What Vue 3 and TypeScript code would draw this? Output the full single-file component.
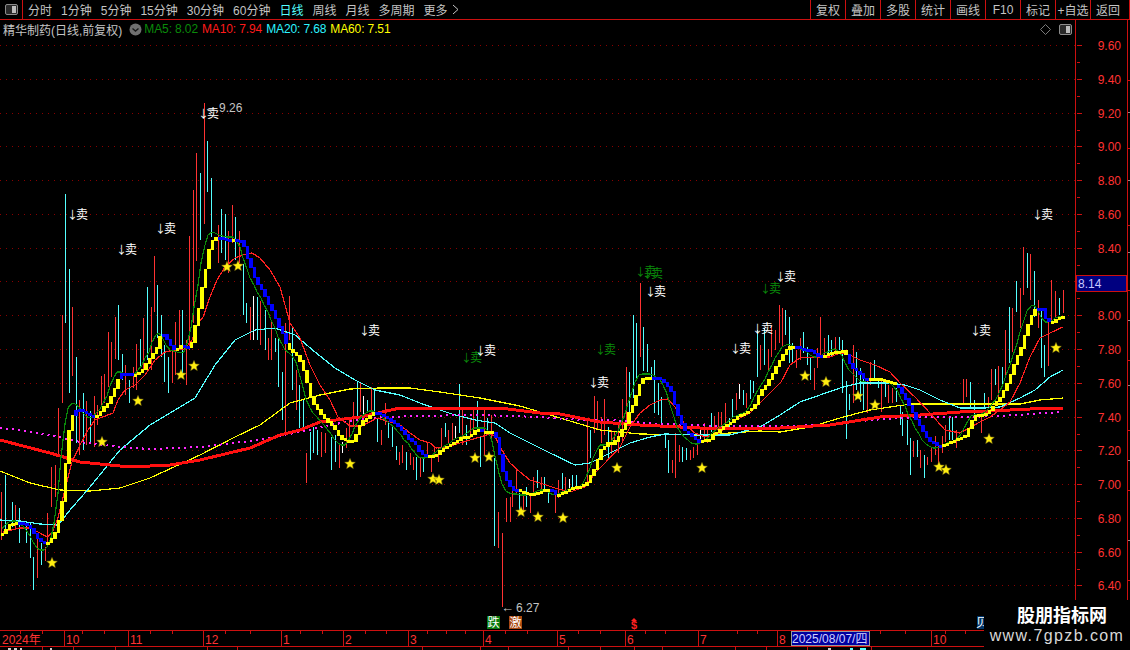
<script setup lang="ts">
type Pt = [number, number]

const periods = ['分时', '1分钟', '5分钟', '15分钟', '30分钟', '60分钟', '日线', '周线', '月线', '多周期', '更多']
const actions = ['复权', '叠加', '多股', '统计', '画线', 'F10', '标记', '+自选', '返回']
const legend = [
  { text: 'MA5: 8.02', cls: 'green' },
  { text: 'MA10: 7.94', cls: 'red' },
  { text: 'MA20: 7.68', cls: 'cyan' },
  { text: 'MA60: 7.51', cls: 'yellow' },
]

const priceY = (p: number): number => Math.round(45 + (9.6 - p) * 168.9)
const gridPrices: number[] = Array.from({ length: 17 }, (_, i) => 9.6 - i * 0.2)
const gridY: number[] = gridPrices.map((p) => priceY(p) + 0.5)
const halfTicks: number[] = gridPrices.slice(0, 16).map((p) => priceY(p) + 17.5)

const parsePts = (s: string): Pt[] =>
  s.trim().split(/\s+/).map((t) => {
    const [a, b] = t.split(',').map(Number)
    return [a, b] as Pt
  })

const toPoints = (pts: Pt[]): string => pts.map((p) => p.join(',')).join(' ')

const ma10 = parsePts(`3,532 8,531 20,528 30,528 40,533 47,537 52,533 58,518 65,490 72,462 80,445 88,430 95,420 113,413 118,400 125,390 135,385 145,375 155,360 165,352 175,350 185,349 192,340 197,325 203,317 210,297 217,280 225,267 235,258 243,255 252,253 260,258 270,270 280,287 290,323 300,338 310,365 320,385 330,400 338,417 350,426 362,426 377,418 400,425 410,433 420,440 430,443 436,448 447,447 460,443 470,440 480,437 490,434 495,436 500,447 510,463 520,472 530,480 540,483 555,488 570,492 585,487 595,473 605,463 620,447 630,427 640,413 650,405 660,400 668,399 675,407 685,425 695,433 705,437 720,433 730,423 750,413 765,398 781,382 790,365 800,358 815,357 830,357 840,353 850,355 860,360 875,365 890,372 900,383 915,397 930,413 945,430 960,433 980,422 990,417 1000,410 1010,402 1020,383 1030,357 1040,338 1050,333 1063,327`)
const ma20 = parsePts(`0,520 20,521 40,524 58,525 70,510 90,487 120,450 150,425 175,410 195,398 215,365 235,340 255,330 275,328 295,335 315,352 335,368 355,380 375,390 400,395 420,403 440,410 455,415 475,420 495,423 510,433 530,443 550,453 575,465 590,463 610,453 630,443 650,437 665,434 700,435 730,435 760,427 780,415 800,402 820,395 840,388 860,383 890,383 905,385 920,390 940,400 960,408 985,408 1000,407 1020,398 1035,390 1050,377 1063,370`)
const ma60 = parsePts(`0,471 30,483 60,490 90,491 120,488 150,478 200,455 235,437 260,425 290,403 320,395 350,389 380,388 410,388 440,392 480,398 520,406 560,418 600,430 640,434 700,435 760,431 780,432 810,427 840,418 870,410 910,404 960,404 1020,404 1040,400 1063,398`)
const thick = parsePts(`0,440 50,453 80,462 130,467 170,465 200,460 250,448 280,435 300,430 320,422 360,417 400,408 430,408 500,408 540,413 560,414 600,422 640,425 700,428 780,428 830,425 880,417 920,415 960,412 990,411 1030,409 1063,408`)
const dotted = parsePts(`0,428 20,430 50,435 80,442 120,447 150,449 200,447 250,441 300,432 330,425 370,418 410,416 480,415 540,417 580,420 610,420 660,424 720,426 780,426 830,425 870,420 920,417 960,417 1000,416 1063,412`)

const ladderPts = parsePts(`0,535 5,530 8,525 14,523 20,523 28,527 33,534 38,541 44,544 47,543 52,537 56,528 59,513 63,490 65,455 69,423 73,412 78,410 85,414 92,418 95,417 100,411 103,407 108,402 112,392 116,383 118,376 122,373 130,375 133,375 137,374 142,370 146,362 150,357 155,350 158,340 160,333 164,336 169,345 173,349 175,350 180,346 187,347 190,345 193,330 197,312 200,293 204,273 207,253 211,242 214,238 218,238 224,240 232,240 235,241 240,241 243,247 246,258 250,268 253,277 257,285 261,291 264,297 268,306 272,312 277,325 282,335 286,347 289,351 295,355 300,363 303,373 307,387 310,400 315,408 320,415 325,420 331,427 335,432 339,438 345,442 350,441 353,441 357,428 360,423 363,420 368,417 371,413 375,412 382,416 387,419 392,423 397,427 402,432 407,439 412,443 415,446 420,455 425,456 430,456 435,455 440,450 445,447 450,445 455,442 460,438 465,437 470,436 472,432 477,430 480,431 483,433 490,431 495,438 498,453 502,472 505,480 509,487 513,491 517,490 520,492 525,494 534,494 538,492 543,491 545,489 550,490 555,495 558,495 564,492 570,489 575,487 580,487 587,482 590,475 594,468 597,458 600,450 604,447 607,443 611,445 615,440 618,436 621,430 625,423 628,413 632,405 636,393 639,383 643,378 647,378 655,378 660,380 665,385 670,392 673,403 676,413 680,423 683,431 687,433 690,436 693,438 696,441 699,443 702,441 705,440 709,440 712,435 715,433 719,430 722,427 730,423 735,418 740,415 745,413 750,410 754,405 757,397 761,390 765,385 768,380 772,373 775,367 778,362 782,355 785,350 789,347 793,347 796,347 800,349 806,350 810,351 812,352 815,355 820,358 823,357 825,355 829,353 835,352 839,352 843,350 847,360 850,368 856,372 860,375 864,382 868,380 870,379 875,379 880,380 885,381 890,383 893,385 897,387 900,392 902,395 906,402 910,410 914,418 917,423 921,430 925,437 928,441 932,443 936,446 940,446 946,444 950,442 955,440 960,438 963,438 966,432 969,425 973,417 978,415 983,415 987,413 991,408 995,403 1000,397 1004,388 1008,380 1011,370 1015,360 1020,348 1023,337 1027,325 1031,315 1034,310 1037,309 1041,309 1043,313 1045,321 1051,323 1055,320 1059,318 1063,316`)

const blueRanges: Pt[] = [[18, 45], [75, 93], [120, 131], [160, 174], [182, 188], [216, 231], [234, 288], [375, 428], [478, 482], [493, 518], [548, 557], [650, 700], [793, 811], [812, 821], [846, 868], [895, 940], [1036, 1048]]

const interp = (pts: Pt[], x: number): number => {
  if (x <= pts[0][0]) return pts[0][1]
  for (let i = 1; i < pts.length; i++) {
    if (x <= pts[i][0]) {
      const [x0, y0] = pts[i - 1]
      const [x1, y1] = pts[i]
      return y0 + ((y1 - y0) * (x - x0)) / (x1 - x0)
    }
  }
  return pts[pts.length - 1][1]
}

const STEP = 3.5
const samples: number[] = Array.from({ length: 304 }, (_, i) => 1.5 + i * STEP)
const ladder = samples.map((x, i) => {
  const y = interp(ladderPts, x)
  const prev = i > 0 ? interp(ladderPts, samples[i - 1]) : y
  const blue = blueRanges.some(([a, b]) => x >= a && x <= b)
  return {
    x: Math.round(x) - 1,
    y: Math.round(Math.min(y, prev) - 1),
    h: Math.max(3, Math.round(Math.abs(y - prev) + 1)),
    w: Math.round(x + STEP) - Math.round(x),
    fill: blue ? '#0000ff' : '#ffff00',
  }
})

const avg = (x: number, r: number): number => {
  let s = 0
  for (let k = -r; k <= r; k++) s += interp(ladderPts, x + k * STEP)
  return s / (2 * r + 1)
}
const ma5 = toPoints(
  samples
    .filter((x) => x < 1064)
    .map((x): Pt => {
      const near = avg(x + 4, 1)
      const far = avg(x + 4, 8)
      return [Math.round(x), Math.round(near + 0.25 * (near - far))]
    }),
)

const wickData = `1 492 540 r|5 475 530 c|12 502 527 c|15 505 530 r|19 508 543 c|26 525 543 c|30 523 558 c|33 557 590 c|37 535 578 r|41 543 565 c|45 547 561 r|47 513 543 r|51 467 507 r|55 465 497 r|58 408 455 r|62 315 403 r|65 194 323 c|69 269 393 c|72 307 376 r|76 357 443 c|79 400 455 r|83 393 450 c|86 401 445 r|90 411 443 c|94 396 447 r|97 405 425 r|101 376 407 r|104 374 403 r|108 332 387 r|111 342 377 r|115 317 359 r|118 305 360 c|122 354 380 c|125 365 395 r|129 380 403 c|133 367 388 r|136 344 390 r|140 339 367 c|143 318 370 r|147 287 360 c|151 307 370 r|154 256 312 r|157 285 338 c|161 315 357 c|164 345 382 c|168 357 393 c|172 350 383 r|175 322 375 r|179 310 350 r|182 310 375 c|186 340 385 r|189 236 350 r|193 190 323 r|196 153 261 r|200 173 240 c|204 103 224 r|207 141 192 c|211 178 237 c|218 225 263 r|221 209 253 c|225 214 260 c|228 231 273 r|232 205 243 r|235 217 260 c|239 231 263 r|243 264 315 c|246 303 323 c|250 307 340 r|253 296 340 w|257 297 340 c|260 301 345 r|265 310 350 c|268 338 360 r|271 320 360 r|275 338 352 c|278 337 387 c|282 372 420 c|285 323 435 r|289 296 340 r|292 327 390 c|296 370 410 r|299 385 428 c|303 400 430 c|306 453 483 r|310 432 460 c|313 427 453 c|317 430 455 c|321 432 457 r|325 433 453 r|331 437 470 c|335 435 462 c|339 443 468 r|342 442 453 w|346 428 448 r|349 418 440 r|353 402 427 r|357 382 423 c|360 382 412 r|363 396 417 w|367 400 413 c|371 387 413 r|374 389 412 c|377 418 442 c|381 430 445 r|385 403 425 r|388 422 438 c|392 427 447 c|396 446 460 c|399 452 465 r|402 445 463 r|406 452 470 c|410 453 465 r|413 457 470 r|416 457 480 c|420 457 477 r|423 457 472 c|427 443 457 r|431 457 472 r|434 448 458 r|438 447 462 r|441 428 448 r|445 423 437 c|448 430 443 r|452 423 440 r|455 426 438 w|459 384 433 c|462 408 445 r|466 425 445 c|470 418 438 r|473 409 430 r|477 401 427 c|480 437 467 c|484 408 455 r|487 418 432 c|491 415 442 r|494 458 546 c|498 512 548 r|502 533 607 r|506 498 522 r|510 497 522 r|512 490 507 r|516 470 493 r|519 493 510 c|523 493 510 r|526 487 507 c|530 493 513 r|533 477 493 r|537 470 488 c|541 477 492 r|544 477 492 c|548 492 503 c|555 490 513 r|558 480 498 r|562 473 490 c|565 477 492 r|569 479 488 w|572 475 488 c|576 475 487 c|587 420 483 r|590 430 458 c|594 396 433 r|597 401 430 r|601 417 443 r|604 399 435 r|608 427 460 c|611 430 454 r|614 432 445 r|618 422 453 r|622 399 443 r|626 367 420 r|629 372 420 c|633 315 398 c|636 323 380 c|640 283 357 r|643 327 371 c|647 344 372 c|651 367 377 c|654 360 413 c|658 383 415 c|661 397 427 c|665 433 448 c|668 440 473 c|672 460 473 r|675 433 478 r|679 445 462 r|682 447 462 c|686 448 460 c|690 450 460 r|693 447 458 r|697 443 455 r|700 427 443 w|704 423 440 r|707 427 443 r|711 413 432 c|714 416 433 r|718 412 430 r|721 412 427 r|725 403 423 r|729 418 428 c|732 399 417 c|736 393 410 r|739 384 399 w|743 390 405 c|746 393 408 r|750 380 399 c|753 381 393 c|757 330 377 c|760 345 370 r|764 328 365 c|768 349 370 r|771 325 357 r|775 330 350 r|779 305 343 r|782 308 347 r|785 310 335 c|789 317 363 c|792 343 363 c|796 350 368 r|800 338 360 r|803 332 353 c|807 347 365 c|810 357 380 c|814 368 390 r|817 348 368 r|820 317 355 r|824 338 358 r|828 335 358 c|831 340 357 c|835 337 355 r|839 337 350 c|842 340 393 c|846 381 439 c|849 394 410 c|853 345 403 r|856 352 390 c|860 368 402 c|863 375 410 c|867 378 413 r|870 362 385 r|874 360 378 c|878 380 388 c|881 378 412 r|885 383 397 c|888 385 403 r|892 388 403 r|896 388 402 c|900 405 425 c|902 412 436 c|907 420 445 c|910 438 475 c|913 441 457 r|917 440 457 c|920 450 468 r|924 455 478 c|927 457 465 r|931 448 462 r|935 436 455 r|938 443 467 r|942 436 453 r|945 425 442 r|949 417 440 c|952 417 440 c|956 430 448 r|963 379 405 r|966 379 397 r|970 382 407 c|974 400 415 c|981 413 433 r|984 393 407 c|988 397 408 r|991 369 400 r|995 369 385 c|998 366 397 r|1002 367 387 c|1005 330 377 r|1009 307 363 c|1012 308 352 r|1016 281 312 c|1020 288 328 r|1023 247 295 r|1027 253 288 c|1030 254 300 r|1034 271 317 c|1038 300 328 r|1041 310 368 c|1044 345 377 c|1048 320 366 r|1051 280 320 r|1055 291 317 r|1059 298 315 c|1063 290 313 r`
const wickColors: Record<string, string> = { r: '#ff3232', c: '#54ffff', w: '#ffffff' }
const wicks = wickData.split('|').map((row) => {
  const [x, a, b, c] = row.split(' ')
  return { x: Number(x) + 0.5, y1: Number(a), y2: Number(b), color: wickColors[c] }
})

const starPath = (cx: number, cy: number, r = 5.6): string => {
  const out: string[] = []
  for (let i = 0; i < 10; i++) {
    const rad = i % 2 === 0 ? r : r * 0.46
    const a = (Math.PI / 5) * i - Math.PI / 2
    out.push(`${(cx + rad * Math.cos(a)).toFixed(1)},${(cy + rad * Math.sin(a)).toFixed(1)}`)
  }
  return out.join(' ')
}
const stars: string[] = ([[52, 563], [102, 442], [138, 401], [181, 375], [194, 366], [227, 267], [238, 266], [350, 464], [433, 479], [439, 480], [475, 458], [489, 457], [521, 512], [538, 517], [563, 518], [617, 468], [702, 468], [805, 376], [826, 382], [858, 396], [875, 405], [939, 467], [946, 470], [989, 439], [1056, 348]] as Pt[]).map(([x, y]) => starPath(x, y))

const sellWhite: Pt[] = [[67, 219], [116, 254], [155, 233], [198, 118], [359, 335], [475, 355], [588, 387], [645, 296], [730, 353], [752, 333], [775, 281], [970, 335], [1032, 219]]
const sellGreen: Pt[] = [[461, 362], [595, 354], [635, 276], [642, 278], [760, 293]]

const monthLabels: { x: number; t: string }[] = [
  { x: 64, t: '10' }, { x: 128, t: '11' }, { x: 203, t: '12' }, { x: 281, t: '1' }, { x: 343, t: '2' },
  { x: 408, t: '3' }, { x: 483, t: '4' }, { x: 557, t: '5' }, { x: 625, t: '6' }, { x: 698, t: '7' },
  { x: 777, t: '8' }, { x: 931, t: '10' },
]
const topTicks: number[] = [20, 42, 82, 104, 150, 172, 225, 250, 300, 322, 365, 386, 427, 446, 465, 505, 527, 578, 600, 645, 665, 737, 757, 815, 835, 880, 905, 945, 965]
const lowerTicks: number[] = [42, 73, 115, 207, 237, 422, 480, 508, 568, 600, 634, 662, 735, 766, 807, 871]
const edgeTicks: Pt[] = [[60, 1], [92, 0], [128, 1], [160, 0], [205, 1], [232, 0], [270, 1], [300, 0], [340, 1], [365, 0], [410, 1], [440, 0], [470, 1], [520, 0], [560, 1], [590, 0]]
</script>

<template>
  <div class="screen">
    <header class="toolbar">
      <div class="panel-cell">
        <svg width="13" height="11" viewBox="0 0 13 11">
          <rect x="0.5" y="0.5" width="12" height="10" rx="1.5" fill="#2a2a2a" stroke="#8c8c8c" />
          <rect x="7" y="2" width="4" height="7" fill="#bdbdbd" />
        </svg>
      </div>
      <nav class="periods">
        <span v-for="p in periods" :key="p" class="period" :class="{ active: p === '日线' }">{{ p }}</span>
        <svg class="chev" width="7" height="11" viewBox="0 0 7 11">
          <path d="M1 1l5 4.5L1 10" fill="none" stroke="#c4c4c4" />
        </svg>
      </nav>
      <div class="actions">
        <span v-for="a in actions" :key="a" class="action">{{ a }}</span>
      </div>
    </header>

    <main class="body">
      <section class="chart">
        <div class="legend">
          <span class="title">精华制药(日线,前复权)</span>
          <svg class="drop" width="13" height="13" viewBox="0 0 13 13">
            <circle cx="6.5" cy="6.5" r="6" fill="#707070" />
            <path d="M3.5 5.5l3 2.5 3-2.5" fill="none" stroke="#1a1a1a" stroke-width="1.4" />
          </svg>
          <span v-for="l in legend" :key="l.text" class="ma" :class="l.cls">{{ l.text }}</span>
          <div class="legend-tools">
            <svg width="11" height="11" viewBox="0 0 11 11">
              <path d="M5.5 0.5l5 5-5 5-5-5z" fill="none" stroke="#7a7a7a" />
            </svg>
            <svg width="13" height="11" viewBox="0 0 13 11">
              <rect x="0.5" y="0.5" width="12" height="10" rx="1.5" fill="#2a2a2a" stroke="#8c8c8c" />
              <rect x="7" y="2" width="4" height="7" fill="#bdbdbd" />
            </svg>
          </div>
        </div>
        <svg class="plot" width="1075" height="592" viewBox="0 38 1075 592">
          <line v-for="y in gridY" :key="y" x1="0" x2="1075" :y1="y" :y2="y" class="grid" />
          <g shape-rendering="crispEdges">
            <line v-for="(w, i) in wicks" :key="i" :x1="w.x" :x2="w.x" :y1="w.y1" :y2="w.y2" :stroke="w.color" />
          </g>
          <g fill="none" stroke-linejoin="round">
            <polyline :points="toPoints(ma60)" stroke="#ffff00" shape-rendering="crispEdges" stroke-width="1.2" />
            <polyline :points="toPoints(ma20)" stroke="#54ffff" shape-rendering="crispEdges" stroke-width="1.2" />
            <polyline :points="toPoints(dotted)" stroke="#ff28ff" stroke-width="2" stroke-dasharray="2 4" shape-rendering="crispEdges" />
            <polyline :points="toPoints(thick)" stroke="#ff1010" stroke-width="3" shape-rendering="crispEdges" />
            <polyline :points="toPoints(ma10)" stroke="#ff2020" shape-rendering="crispEdges" stroke-width="1.2" />
            <polyline :points="ma5" stroke="#0a8a0a" shape-rendering="crispEdges" stroke-width="1.2" />
          </g>
          <g shape-rendering="crispEdges">
            <rect v-for="(b, i) in ladder" :key="i" :x="b.x" :y="b.y" :width="b.w" :height="b.h" :fill="b.fill" />
          </g>
          <polygon v-for="(s, i) in stars" :key="i" :points="s" fill="#ffee10" stroke="#8a7a10" stroke-width="0.5" />
          <text v-for="(p, i) in sellGreen" :key="'g' + i" :x="p[0]" :y="p[1]" class="sell sell-green"><tspan class="sell-arrow">↓</tspan><tspan dx="-2">卖</tspan></text>
          <text v-for="(p, i) in sellWhite" :key="'w' + i" :x="p[0]" :y="p[1]" class="sell sell-white"><tspan class="sell-arrow">↓</tspan><tspan dx="-2">卖</tspan></text>
          <text x="204" y="112" class="extreme"><tspan class="ext-arrow">←</tspan><tspan dx="2">9.26</tspan></text>
          <text x="501" y="612" class="extreme"><tspan class="ext-arrow">←</tspan><tspan dx="2">6.27</tspan></text>
          <rect x="487" y="616" width="13" height="13" fill="#0a7a10" />
          <text x="493.5" y="627" class="tag">跌</text>
          <rect x="509" y="616" width="13" height="13" fill="#a8480f" />
          <text x="515.5" y="627" class="tag">激</text>
          <path d="M631 621l3-3 3 3z" fill="#ff2020" />
          <text x="634" y="629" class="dollar">$</text>
          <rect x="977" y="616" width="7" height="13" fill="#003366" />
          <text x="982" y="627" class="tag">贝</text>
        </svg>
      </section>
      <aside class="price-axis">
        <svg width="51" height="610" viewBox="1075 20 51 610">
          <g shape-rendering="crispEdges" stroke="#cc1010">
            <line v-for="(p, i) in gridPrices" :key="i" x1="1076" x2="1081" :y1="priceY(p) + 0.5" :y2="priceY(p) + 0.5" />
            <line v-for="y in halfTicks" :key="y" x1="1076" x2="1079" :y1="y" :y2="y" />
          </g>
          <text v-for="p in gridPrices" :key="p" x="1120" :y="priceY(p) + 5" class="price">{{ p.toFixed(2) }}</text>
          <rect x="1075.5" y="275.5" width="50" height="16" fill="#000080" stroke="#cc1010" />
          <text x="1077" y="288" class="last">8.14</text>
        </svg>
      </aside>
      <aside class="edge">
        <svg width="4" height="610" viewBox="0 0 4 610">
          <rect v-for="(t, i) in edgeTicks" :key="i" x="0" :y="t[0]" width="3" height="1" :fill="t[1] ? '#cc1010' : '#8a8a8a'" />
        </svg>
      </aside>
    </main>

    <footer class="dates">
      <svg width="1130" height="20" viewBox="0 630 1130 20">
        <g shape-rendering="crispEdges" stroke="#cc1010">
          <line x1="0" x2="1130" y1="630.5" y2="630.5" />
          <line x1="0" x2="1130" y1="646.5" y2="646.5" />
          <line v-for="m in monthLabels" :key="m.x" :x1="m.x + 0.5" :x2="m.x + 0.5" y1="631" y2="646" />
          <line v-for="t in topTicks" :key="t" :x1="t + 0.5" :x2="t + 0.5" y1="631" y2="634" />
          <line v-for="t in lowerTicks" :key="t" :x1="t + 0.5" :x2="t + 0.5" y1="647" y2="650" />
        </g>
        <text x="2" y="644" class="axis-text">2024年</text>
        <text v-for="m in monthLabels" :key="m.x" :x="m.x + 2" y="644" class="axis-text">{{ m.t }}</text>
        <rect x="791.5" y="631.5" width="78" height="14" fill="#0000a0" stroke="#9a9a9a" />
        <text x="792" y="643" class="axis-date">2025/08/07/四</text>
        <g fill="#cfcfcf" shape-rendering="crispEdges">
          <rect x="8" y="648" width="3" height="2" />
          <rect x="14" y="648" width="3" height="2" />
          <rect x="20" y="648" width="2" height="2" />
          <rect x="50" y="648" width="2" height="2" />
          <rect x="828" y="648" width="3" height="2" />
          <rect x="850" y="648" width="3" height="2" fill="#54ffff" />
          <rect x="860" y="648" width="6" height="2" fill="#54ffff" />
        </g>
      </svg>
    </footer>

    <aside class="watermark">
      <div class="wm-title">股朋指标网</div>
      <div class="wm-url">www.7gpzb.com</div>
    </aside>
  </div>
</template>

<style>
html, body { margin: 0; background: #000; }
</style>

<style scoped>
.screen {
  position: relative;
  width: 1130px;
  height: 650px;
  overflow: hidden;
  background: #000;
  color: #c4c4c4;
  font: 12px "Liberation Sans", "Noto Sans CJK SC", sans-serif;
}
.toolbar {
  display: flex;
  align-items: center;
  height: 19px;
  border-bottom: 1px solid #cc1010;
}
.panel-cell {
  display: flex;
  align-items: center;
  justify-content: center;
  width: 22px;
  height: 100%;
  border-right: 1px solid #cc1010;
}
.panel-cell svg { display: block; }
.periods {
  display: flex;
  align-items: center;
  gap: 9px;
  padding-left: 5px;
  font-size: 12px;
}
.period { white-space: nowrap; }
.period.active { color: #54ffff; }
.chev { margin-left: -5px; }
.actions {
  display: flex;
  height: 100%;
  margin-left: auto;
  padding-right: 4px;
  border-right: 1px solid #cc1010;
  box-sizing: content-box;
  margin-right: 0;
}
.action {
  display: flex;
  align-items: center;
  justify-content: center;
  box-sizing: border-box;
  width: 35px;
  border-left: 1px solid #cc1010;
  white-space: nowrap;
}
.body {
  display: flex;
  height: 610px;
}
.chart {
  width: 1075px;
  flex: none;
  border-right: 1px solid #cc1010;
}
.legend {
  display: flex;
  align-items: center;
  gap: 4px;
  height: 18px;
  padding-left: 3px;
}
.title { white-space: nowrap; }
.drop { margin-left: 3px; margin-right: -2px; }
.ma { white-space: nowrap; letter-spacing: -0.12px; }
.green { color: #0a8a0a; }
.red { color: #ff1a1a; }
.cyan { color: #2cf4ff; }
.yellow { color: #ffff00; }
.legend-tools {
  display: flex;
  align-items: center;
  gap: 8px;
  margin-left: auto;
  padding-right: 3px;
}
.plot { display: block; }
.grid {
  stroke: #8a0000;
  stroke-dasharray: 1 5;
  shape-rendering: crispEdges;
}
.sell {
  font-family: "Noto Sans CJK SC", sans-serif;
  font-size: 12px;
}
.sell-arrow { font-size: 11px; }
.sell-white { fill: #ffffff; }
.sell-green { fill: #0a8a0a; }
.extreme { fill: #c4c4c4; font-size: 12px; }
.ext-arrow { font-size: 13px; }
.tag {
  fill: #ffffff;
  font-family: "Noto Sans CJK SC", sans-serif;
  font-size: 12px;
  text-anchor: middle;
}
.dollar {
  fill: #ff2020;
  font: bold 11px "Liberation Sans", sans-serif;
  text-anchor: middle;
}
.price-axis { width: 51px; flex: none; border-right: 1px solid #cc1010; }
.price-axis svg, .edge svg, .dates svg { display: block; }
.price { fill: #ff3232; font-size: 12px; text-anchor: end; }
.last { fill: #c8c8ff; font-size: 12px; }
.edge { flex: 1; }
.dates { height: 20px; }
.axis-text { fill: #ff3232; font-size: 12px; }
.axis-date { fill: #d0d0ff; font-size: 12px; }
.watermark {
  position: absolute;
  right: 0;
  bottom: 0;
  display: flex;
  flex-direction: column;
  align-items: center;
  width: 146px;
  height: 50px;
  background: #000;
}
.wm-title {
  margin: 3px 0 0 10px;
  color: #fff;
  font: bold 18px/22px "Noto Sans CJK SC", sans-serif;
  white-space: nowrap;
}
.wm-url {
  margin-top: 1px;
  color: #d8d8d8;
  font: 16px/20px "Liberation Sans", sans-serif;
  letter-spacing: 1.4px;
  white-space: nowrap;
}
</style>
